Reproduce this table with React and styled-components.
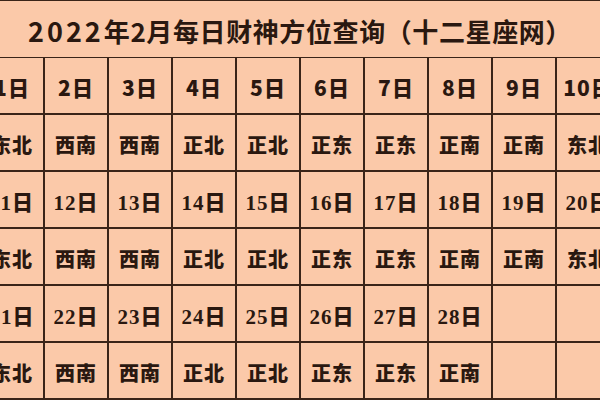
import React from "react";
import styled, { createGlobalStyle } from "styled-components";

const GlobalStyle = createGlobalStyle`
  html, body {
    margin: 0;
    padding: 0;
    background: #fbc9a9;
  }
  #root {
    width: 600px;
    height: 400px;
    overflow: hidden;
  }
`;

const Page = styled.div`
  width: 600px;
  height: 400px;
  overflow: hidden;
  background: #fbc9a9;
`;

const Grid = styled.div`
  display: grid;
  grid-template-columns: repeat(10, 62px);
  grid-auto-rows: 55px;
  gap: 2px;
  padding: 1px 0 2px 0;
  margin-left: -19px;
  width: max-content;
  background: #3a2418;
`;

const TitleCell = styled.div`
  grid-column: 1 / -1;
  height: 54px;
  display: flex;
  align-items: center;
  justify-content: center;
  padding-top: 2px;
  background: #fbc9a9;
  color: #2a1810;
  font-family: "Noto Sans CJK SC", "Liberation Sans", sans-serif;
  font-weight: 700;
  font-size: 26px;
  letter-spacing: 0.6px;
  white-space: nowrap;
`;

const Digits = styled.span`
  letter-spacing: 3px;
  font-size: 27px;
`;

const Cell = styled.div`
  display: flex;
  align-items: center;
  justify-content: center;
  padding-top: 3px;
  background: #fbc9a9;
  color: #2a1810;
  font-family: ${(p) =>
    p.$serif
      ? '"Liberation Serif", "Noto Sans CJK SC", serif'
      : '"Noto Sans CJK SC", "Liberation Sans", sans-serif'};
  font-weight: 900;
  font-size: ${(p) => (p.$dir ? "20px" : "21px")};
  letter-spacing: 1px;
  white-space: nowrap;
`;

const dirs = ["东北", "西南", "西南", "正北", "正北", "正东", "正东", "正南", "正南", "东北"];

const rows = [
  { start: 1, count: 10, serif: false },
  { start: 11, count: 10, serif: true },
  { start: 21, count: 8, serif: true },
];

export default function App() {
  return (
    <Page>
      <GlobalStyle />
      <Grid>
        <TitleCell>
          <Digits>2022</Digits>年2月每日财神方位查询（十二星座网）
        </TitleCell>
        {rows.map((r) => (
          <React.Fragment key={r.start}>
            {Array.from({ length: 10 }).map((_, i) => (
              <Cell key={"d" + i} $serif={r.serif}>
                {i < r.count ? `${r.start + i}日` : ""}
              </Cell>
            ))}
            {Array.from({ length: 10 }).map((_, i) => (
              <Cell key={"w" + i} $dir>
                {i < r.count ? dirs[i] : ""}
              </Cell>
            ))}
          </React.Fragment>
        ))}
      </Grid>
    </Page>
  );
}
